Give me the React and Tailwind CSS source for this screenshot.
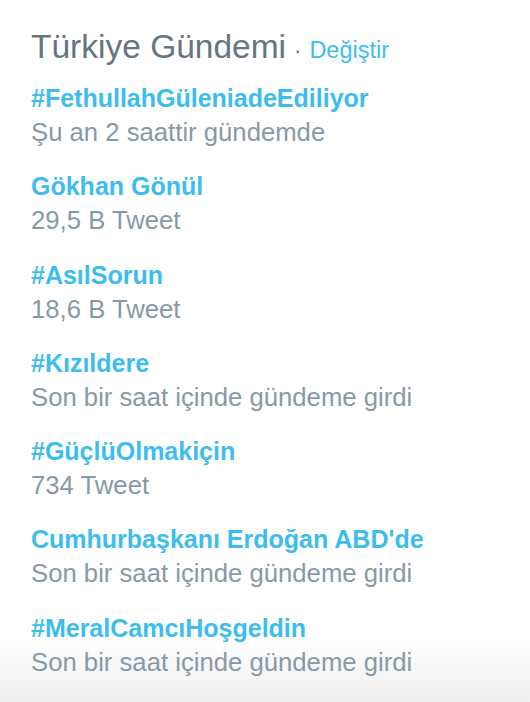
export default function App() {
  const trends = [
    ["#FethullahGüleniadeEdiliyor", "Şu an 2 saattir gündemde"],
    ["Gökhan Gönül", "29,5 B Tweet"],
    ["#AsılSorun", "18,6 B Tweet"],
    ["#Kızıldere", "Son bir saat içinde gündeme girdi"],
    ["#GüçlüOlmakiçin", "734 Tweet"],
    ["Cumhurbaşkanı Erdoğan ABD'de", "Son bir saat içinde gündeme girdi"],
    ["#MeralCamcıHoşgeldin", "Son bir saat içinde gündeme girdi"],
  ];
  return (
    <div
      className="h-[702px] w-[530px] overflow-hidden bg-[linear-gradient(to_bottom,#ffffff_0px,#ffffff_635px,#efefef_702px)] pl-[31px] pt-[26px]"
      style={{ fontFamily: '"Liberation Sans", Arial, sans-serif' }}
    >
      <div className="flex items-baseline leading-[42px]">
        <span className="text-[33.5px] text-[#66757f]">Türkiye Gündemi</span>
        <span className="ml-[8px] text-[22px] text-[#66757f]">·</span>
        <span className="ml-[8px] text-[23.5px] text-[#3dbdee]">Değiştir</span>
      </div>
      <div className="mt-[10px] flex flex-col">
        {trends.map(([name, sub]) => (
          <div key={name} className="flex flex-col pb-[21.3px]">
            <span className="text-[25px] font-bold leading-[33px] text-[#3dbdee]">{name}</span>
            <span className="text-[25.7px] leading-[34px] text-[#8899a6]">{sub}</span>
          </div>
        ))}
      </div>
    </div>
  );
}
